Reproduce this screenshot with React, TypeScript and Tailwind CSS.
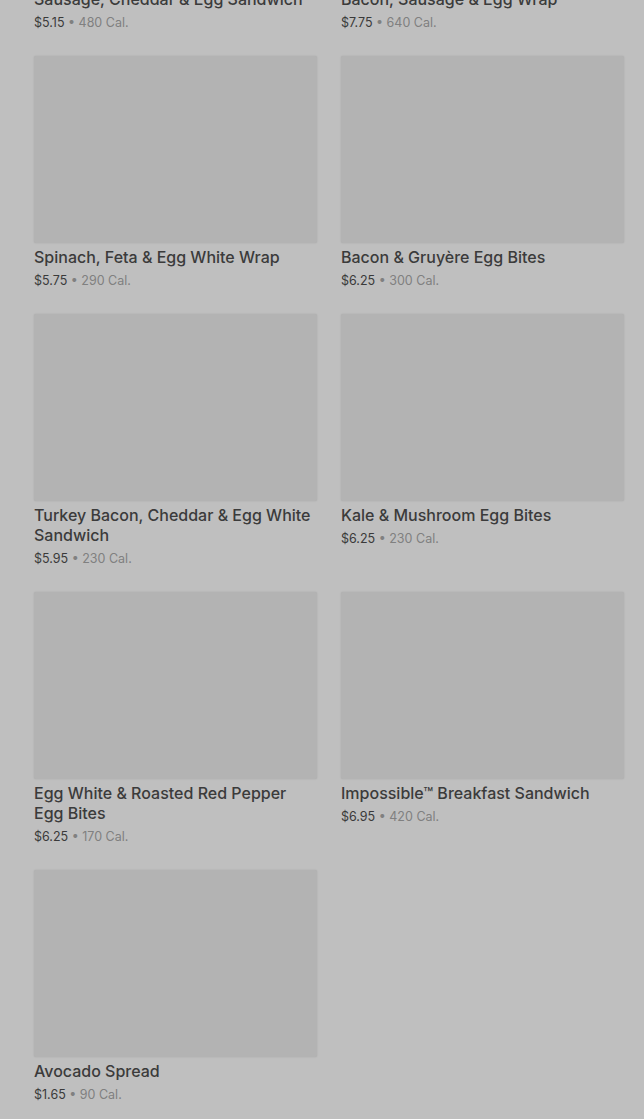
import React from "react";

type Item = { name: string; price: string; cal: string };

const items: Item[] = [
  { name: "Sausage, Cheddar & Egg Sandwich", price: "$5.15", cal: "480 Cal." },
  { name: "Bacon, Sausage & Egg Wrap", price: "$7.75", cal: "640 Cal." },
  { name: "Spinach, Feta & Egg White Wrap", price: "$5.75", cal: "290 Cal." },
  { name: "Bacon & Gruyère Egg Bites", price: "$6.25", cal: "300 Cal." },
  { name: "Turkey Bacon, Cheddar & Egg White Sandwich", price: "$5.95", cal: "230 Cal." },
  { name: "Kale & Mushroom Egg Bites", price: "$6.25", cal: "230 Cal." },
  { name: "Egg White & Roasted Red Pepper Egg Bites", price: "$6.25", cal: "170 Cal." },
  { name: "Impossible™ Breakfast Sandwich", price: "$6.95", cal: "420 Cal." },
  { name: "Avocado Spread", price: "$1.65", cal: "90 Cal." },
];

function Card({ item }: { item: Item }) {
  return (
    <div className="flex flex-col">
      <div className="h-[187px] w-full rounded-[2px] bg-[#b3b3b3] shadow-[0_0_2px_rgba(0,0,0,0.12)]" />
      <div className="mt-[4px] text-[16px] leading-[20px] font-medium text-[#3b3b3b]">
        {item.name}
      </div>
      <div className="mt-[5px] text-[12.5px] leading-[18px]">
        <span className="text-[#3a3a3a]">{item.price}</span>
        <span className="text-[#808080]"> • {item.cal}</span>
      </div>
    </div>
  );
}

export default function App() {
  return (
    <div
      className="h-[1119px] w-[644px] overflow-hidden bg-[#bfbfbf]"
      style={{ fontFamily: "Inter, 'Noto Sans', sans-serif" }}
    >
      <div className="mt-[-202px] grid grid-cols-2 gap-x-[24px] gap-y-[24px] pl-[34px] pr-[20px]">
        {items.map((it) => (
          <Card key={it.name} item={it} />
        ))}
      </div>
    </div>
  );
}
